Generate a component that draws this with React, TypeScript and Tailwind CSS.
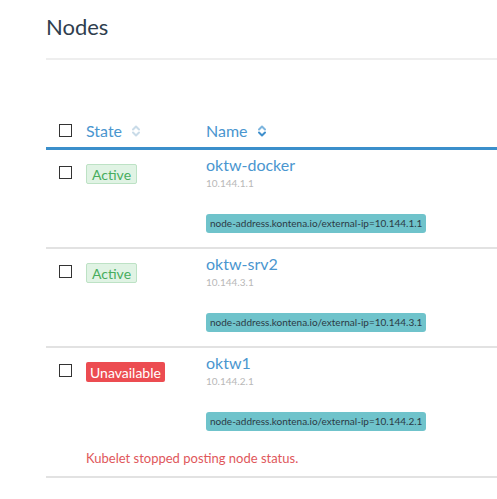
import React from 'react';

type Node = {
  name: string;
  ip: string;
  state: 'Active' | 'Unavailable';
  error?: string;
};

const nodes: Node[] = [
  { name: 'oktw-docker', ip: '10.144.1.1', state: 'Active' },
  { name: 'oktw-srv2', ip: '10.144.3.1', state: 'Active' },
  { name: 'oktw1', ip: '10.144.2.1', state: 'Unavailable', error: 'Kubelet stopped posting node status.' },
];

function SortIcon({ active }: { active?: boolean }) {
  const up = active ? '#7db5de' : '#c9dbe8';
  const down = active ? '#3f8fcc' : '#c9dbe8';
  return (
    <svg width="10" height="14" viewBox="0 0 10 14" fill="none" className="ml-[9px]">
      <path d="M2 5.5 L5 2.5 L8 5.5" stroke={up} strokeWidth="2" strokeLinecap="round" strokeLinejoin="round" />
      <path d="M2 8.5 L5 11.5 L8 8.5" stroke={down} strokeWidth="2" strokeLinecap="round" strokeLinejoin="round" />
    </svg>
  );
}

function Checkbox() {
  return <span className="block w-[13px] h-[13px] border-[1.5px] border-[#333] bg-white" />;
}

function StateBadge({ state }: { state: Node['state'] }) {
  if (state === 'Active') {
    return (
      <span className="flex items-center h-[20px] px-[5px] text-[14px] rounded-[2px] border border-[#bde2c5] bg-[#e0f3e4] text-[#47ad5d]">
        Active
      </span>
    );
  }
  return (
    <span className="flex items-center h-[20px] px-[4px] text-[14px] rounded-[2px] bg-[#ec4c51] text-white">
      Unavailable
    </span>
  );
}

function NodeRow({ node }: { node: Node }) {
  return (
    <div className="border-b-2 border-[#e2e2e2] pt-[5px] pb-[14px]">
      <div className="flex items-start">
        <div className="w-[40px] pl-[13px] pt-[11px]">
          <Checkbox />
        </div>
        <div className="w-[120px] pt-[9px] flex">
          <StateBadge state={node.state} />
        </div>
        <div className="flex-1 flex flex-col items-start">
          <a className="block text-[16px] leading-[20px] text-[#4a96cf]">{node.name}</a>
          <div className="text-[10px] leading-[14px] mt-[1px] text-[#b8b8b8]">{node.ip}</div>
          <span className="flex items-center mt-[24px] h-[19px] px-[4px] text-[10px] rounded-[3px] bg-[#6fc3cb] text-[#2b3a45]">
            node-address.kontena.io/external-ip={node.ip}
          </span>
        </div>
      </div>
      {node.error && (
        <div className="pl-[40px] mt-[19px] -mb-[4px] text-[13px] leading-[16px] text-[#e0575b]">{node.error}</div>
      )}
    </div>
  );
}

export default function App() {
  return (
    <div className="min-h-[499px] bg-white overflow-hidden pl-[46px]" style={{ fontFamily: 'Lato, "Open Sans", sans-serif' }}>
      <h1 className="pt-[12px] text-[22px] leading-[30px] font-normal text-[#2f3e4e]">Nodes</h1>
      <div className="mt-[16px] h-[2px] bg-[#eeeeee]" />

      <div className="mt-[54px]">
        <div className="flex items-center h-[36px] border-b-[3px] border-[#3b8fcb] text-[16px] text-[#4a96cf]">
          <div className="w-[40px] pl-[13px]">
            <Checkbox />
          </div>
          <div className="w-[120px] flex items-center">
            State
            <SortIcon />
          </div>
          <div className="flex items-center">
            Name
            <SortIcon active />
          </div>
        </div>

        {nodes.map((n) => (
          <NodeRow key={n.name} node={n} />
        ))}
      </div>
    </div>
  );
}
